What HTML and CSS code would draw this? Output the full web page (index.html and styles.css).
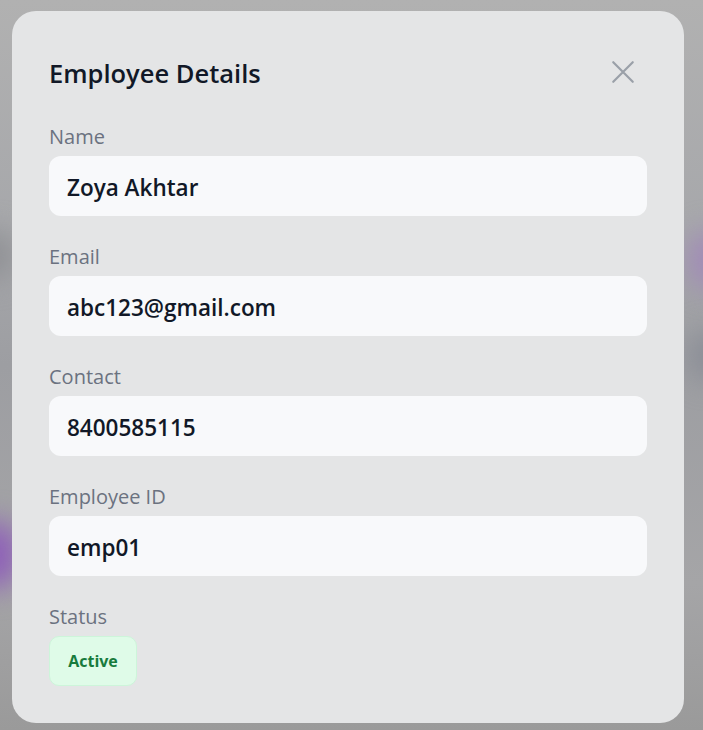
FILE: index.html
```html
<!DOCTYPE html>
<html>
<head>
<meta charset="utf-8">
<link rel="stylesheet" href="styles.css">
</head>
<body>
<div class="backdrop">
  <div class="blob blob-a"></div>
  <div class="blob blob-b"></div>
  <div class="blob blob-c"></div>
  <div class="blob blob-d"></div>
  <section class="modal">
    <header class="modal-header">
      <h2 class="modal-title">Employee Details</h2>
      <button class="close-btn" aria-label="Close">
        <svg width="26" height="26" viewBox="0 0 24 24" fill="none" stroke="currentColor" stroke-width="2" stroke-linecap="round"><path d="M3 3L21 21M21 3L3 21"/></svg>
      </button>
    </header>
    <div class="field">
      <div class="label">Name</div>
      <div class="value">Zoya Akhtar</div>
    </div>
    <div class="field">
      <div class="label">Email</div>
      <div class="value">abc123@gmail.com</div>
    </div>
    <div class="field">
      <div class="label">Contact</div>
      <div class="value">8400585115</div>
    </div>
    <div class="field">
      <div class="label">Employee ID</div>
      <div class="value">emp01</div>
    </div>
    <div class="field last">
      <div class="label">Status</div>
      <div><span class="badge">Active</span></div>
    </div>
  </section>
</div>
</body>
</html>
```
FILE: styles.css
```css
* { box-sizing: border-box; }
html, body { margin: 0; padding: 0; }
body {
  font-family: "Open Sans", "Noto Sans", sans-serif;
  width: 703px;
  height: 730px;
  overflow: hidden;
  background: #a6a7aa;
}
.backdrop {
  position: relative;
  width: 703px;
  height: 730px;
  padding: 11px 19px 7px 12px;
  background:
    linear-gradient(180deg, #b1b1b1 0%, #a7a8ab 30%, #9d9ea2 50%, #a5a5a7 80%, #9a9a9a 100%);
}
.blob {
  position: absolute;
  border-radius: 50%;
  filter: blur(14px);
}
.blob-a { left: -30px; top: 520px; width: 50px; height: 70px; background: #8e5fb8; }
.blob-b { right: -30px; top: 230px; width: 45px; height: 60px; background: #a18ab8; }
.blob-c { right: -30px; top: 330px; width: 45px; height: 50px; background: #8a8d96; }
.blob-d { left: -30px; top: 230px; width: 45px; height: 50px; background: #8f9094; }
.modal {
  position: relative;
  width: 672px;
  height: 712px;
  background: #e4e5e6;
  border-radius: 24px;
  padding: 44px 37px 37px 37px;
  display: flex;
  flex-direction: column;
}
.modal-header {
  display: flex;
  align-items: center;
  justify-content: space-between;
  height: 36px;
  margin-bottom: 32px;
}
.modal-title {
  margin: 0;
  font-size: 25.5px;
  font-weight: 600;
  color: #111827;
  line-height: 36px;
}
.close-btn {
  border: 0;
  background: none;
  padding: 0;
  width: 26px;
  height: 26px;
  margin-right: 11px;
  margin-top: -2px;
  color: #9aa0a8;
  display: flex;
}
.field {
  display: flex;
  flex-direction: column;
  margin-bottom: 27px;
}
.field.last { margin-bottom: 0; }
.label {
  font-size: 20px;
  line-height: 28px;
  color: #6b7280;
  margin-bottom: 5px;
}
.value {
  height: 60px;
  background: #f8f9fb;
  border-radius: 12px;
  padding: 0 18px;
  display: flex;
  align-items: center;
  font-size: 22.5px;
  font-weight: 600;
  color: #111827;
  padding-top: 2px;
}
.badge {
  display: inline-flex;
  align-items: center;
  justify-content: center;
  width: 88px;
  height: 50px;
  background: #dffbe8;
  border: 1px solid #cdf5da;
  border-radius: 10px;
  font-size: 16px;
  font-weight: 700;
  color: #177a3c;
}
```
